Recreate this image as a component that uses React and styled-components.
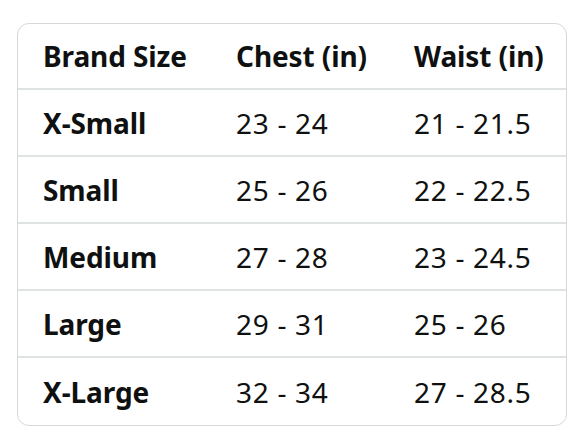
import React from 'react';
import styled, { createGlobalStyle } from 'styled-components';

const GlobalStyle = createGlobalStyle`
  html, body {
    margin: 0;
    padding: 0;
    background: #ffffff;
  }
  body {
    font-family: "Noto Sans", "Open Sans", sans-serif;
    color: #0f1111;
  }
`;

const Page = styled.div`
  padding: 23px 21px 14px 17px;
`;

const Card = styled.div`
  border: 1.5px solid #d5d9d9;
  border-radius: 12px;
  overflow: hidden;
`;

const Row = styled.div`
  display: grid;
  grid-template-columns: 193px 178px 1fr;
  align-items: center;
  height: ${(p) => (p.$header ? 66 : 67)}px;
  padding-left: 25px;
  border-bottom: ${(p) => (p.$last ? 'none' : '2px solid #dfe3e3')};
  box-sizing: border-box;
`;

const Cell = styled.div`
  font-size: 28px;
  font-weight: ${(p) => (p.$bold ? 700 : 400)};
  white-space: nowrap;
  letter-spacing: ${(p) => (p.$bold ? '-0.1px' : '0.7px')};
`;

const rows = [
  ['X-Small', '23 - 24', '21 - 21.5'],
  ['Small', '25 - 26', '22 - 22.5'],
  ['Medium', '27 - 28', '23 - 24.5'],
  ['Large', '29 - 31', '25 - 26'],
  ['X-Large', '32 - 34', '27 - 28.5'],
];

export default function App() {
  return (
    <>
      <GlobalStyle />
      <Page>
        <Card>
          <Row $header>
            <Cell $bold>Brand Size</Cell>
            <Cell $bold>Chest (in)</Cell>
            <Cell $bold>Waist (in)</Cell>
          </Row>
          {rows.map((r, i) => (
            <Row key={r[0]} $last={i === rows.length - 1}>
              <Cell $bold>{r[0]}</Cell>
              <Cell>{r[1]}</Cell>
              <Cell>{r[2]}</Cell>
            </Row>
          ))}
        </Card>
      </Page>
    </>
  );
}
